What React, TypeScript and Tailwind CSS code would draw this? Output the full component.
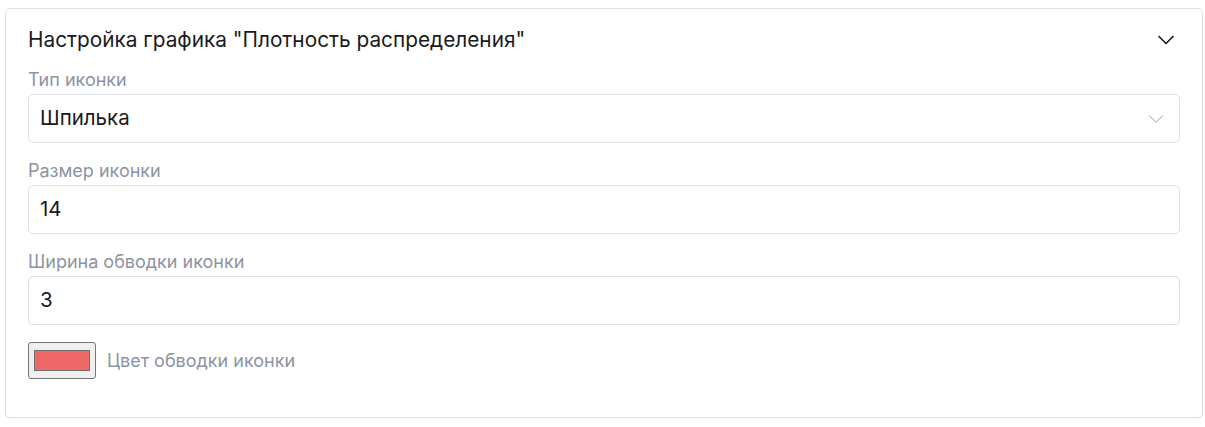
import { ChevronDown } from 'lucide-react';

const fields = [
  { label: 'Размер иконки', value: '14' },
  { label: 'Ширина обводки иконки', value: '3' },
];

export default function App() {
  return (
    <div className="w-[1205px] h-[427px] bg-white pt-[8px] pl-[5px] font-['Inter',sans-serif]">
      <div className="w-[1198px] h-[410px] border border-[#dcdfe6] rounded-[5px] px-[22px] pt-[13px]">
        <div className="flex items-center justify-between h-[36px]">
          <h3 className="text-[20.8px] text-[#1a1a1a] leading-[26px]">Настройка графика "Плотность распределения"</h3>
          <ChevronDown size={28} strokeWidth={1.5} className="text-[#1f1f2e]" />
        </div>

        <div className="mt-[10px]">
          <div className="text-[18px] text-[#8c93a3] leading-[24px] mb-[2px]">Тип иконки</div>
          <div className="h-[49px] border border-[#dcdfe6] rounded-[5px] flex items-center justify-between pl-[11px] pr-[10px]">
            <span className="text-[20.5px] text-[#1a1a1a]">Шпилька</span>
            <ChevronDown size={26} strokeWidth={1} className="text-[#c0c4cc]" />
          </div>
        </div>

        {fields.map((f) => (
          <div key={f.label} className="mt-[16px]">
            <div className="text-[18px] text-[#8c93a3] leading-[24px] mb-[2px]">{f.label}</div>
            <div className="h-[49px] border border-[#dcdfe6] rounded-[5px] flex items-center px-[11px]">
              <span className="text-[20.5px] text-[#1a1a1a]">{f.value}</span>
            </div>
          </div>
        ))}

        <div className="mt-[17px] flex items-center gap-[11px]">
          <div className="w-[68px] h-[37px] bg-[#efefef] border border-[#767676] rounded-[3px] flex items-center justify-center">
            <div className="w-[56px] h-[21px] bg-[#ef6868] border border-[#707070]" />
          </div>
          <span className="text-[18px] text-[#8c93a3]">Цвет обводки иконки</span>
        </div>
      </div>
    </div>
  );
}
